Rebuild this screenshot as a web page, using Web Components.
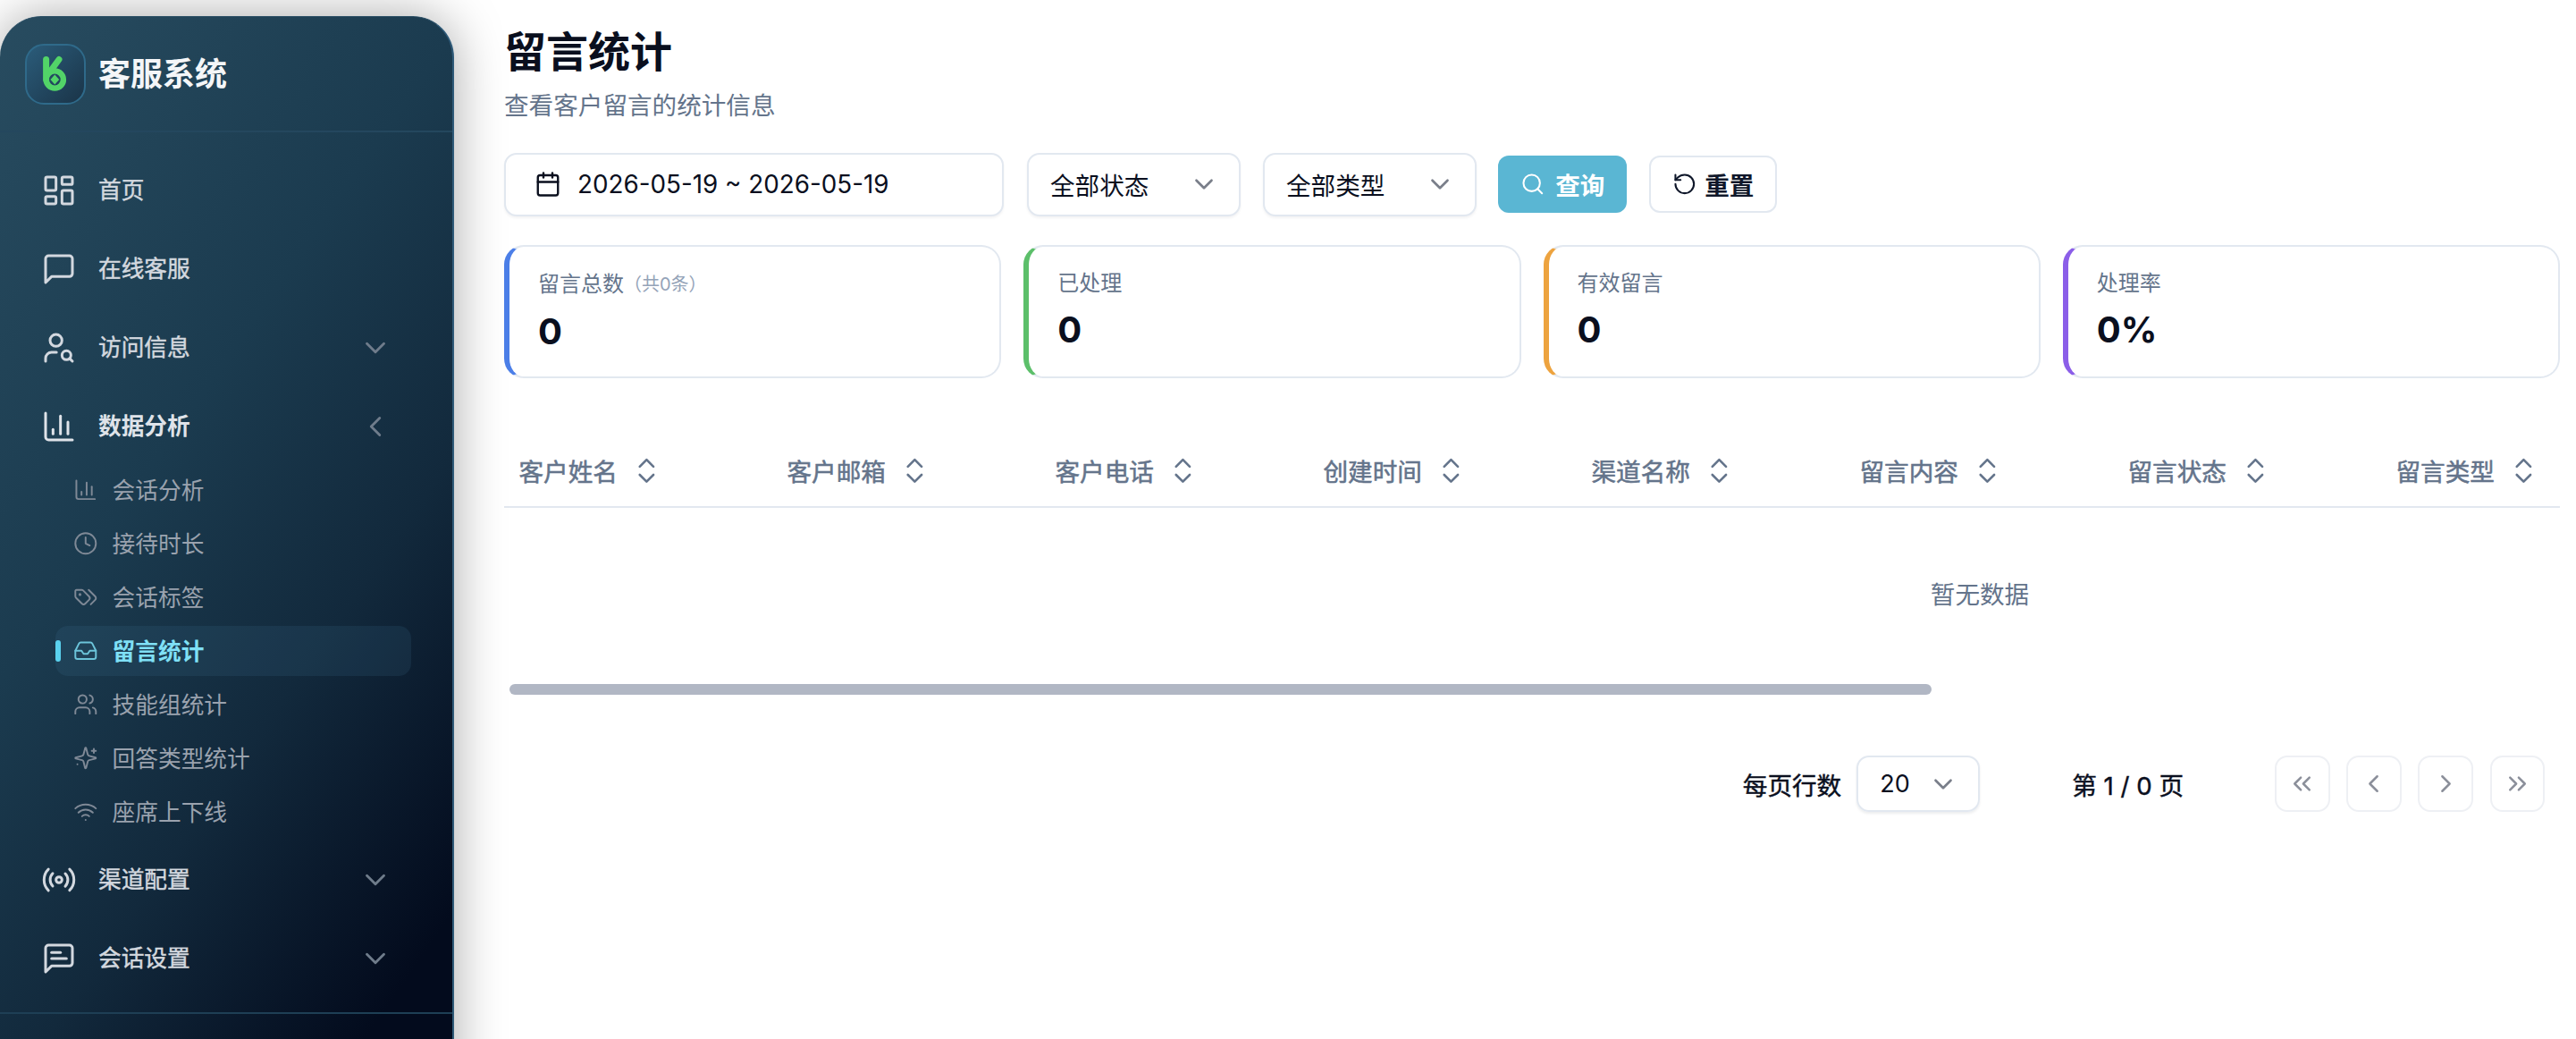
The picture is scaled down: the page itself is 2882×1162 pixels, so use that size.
<!DOCTYPE html>
<html lang="zh-CN">
<head>
<meta charset="utf-8">
<title>留言统计</title>
<style>
  html, body { margin: 0; padding: 0; height: 1162px; overflow: hidden; background: #fff; }
  body { font-family: Inter, "Noto Sans CJK SC", sans-serif; font-size: 25.7px; color: #0a0f1e; }
  app-shell { width: 2882px; height: 1162px; }
</style>
</head>
<body>
<app-shell>
  <app-sidebar slot="side">
    <brand-head>客服系统</brand-head>
    <nav-item icon="dashboard">首页</nav-item>
    <nav-item icon="message">在线客服</nav-item>
    <nav-item icon="usersearch" chevron="down">访问信息</nav-item>
    <nav-item icon="chart" chevron="left" open>数据分析</nav-item>
    <sub-menu>
      <sub-item icon="chart">会话分析</sub-item>
      <sub-item icon="clock">接待时长</sub-item>
      <sub-item icon="tags">会话标签</sub-item>
      <sub-item icon="inbox" active>留言统计</sub-item>
      <sub-item icon="users">技能组统计</sub-item>
      <sub-item icon="sparkles">回答类型统计</sub-item>
      <sub-item icon="wifi">座席上下线</sub-item>
    </sub-menu>
    <nav-item icon="radio" chevron="down">渠道配置</nav-item>
    <nav-item icon="messagetext" chevron="down">会话设置</nav-item>
  </app-sidebar>
  <page-main>
    <page-title sub="查看客户留言的统计信息">留言统计</page-title>
    <filter-bar>
      <date-field>2026-05-19 ~ 2026-05-19</date-field>
      <select-field w="239" gap="26">全部状态</select-field>
      <select-field w="239" gap="25">全部类型</select-field>
      <app-button icon="search" variant="primary" w="144" gap="24">查询</app-button>
      <app-button icon="reset" w="143" gap="25">重置</app-button>
    </filter-bar>
    <stat-grid>
      <stat-card color="#4c7fe8" value="0" note="（共0条）">留言总数</stat-card>
      <stat-card color="#5cbf6a" value="0">已处理</stat-card>
      <stat-card color="#eda33f" value="0">有效留言</stat-card>
      <stat-card color="#8b5ee8" value="0%">处理率</stat-card>
    </stat-grid>
    <data-table>
      <sort-head>客户姓名</sort-head>
      <sort-head>客户邮箱</sort-head>
      <sort-head>客户电话</sort-head>
      <sort-head>创建时间</sort-head>
      <sort-head>渠道名称</sort-head>
      <sort-head>留言内容</sort-head>
      <sort-head>留言状态</sort-head>
      <sort-head>留言类型</sort-head>
    </data-table>
    <page-bar></page-bar>
  </page-main>
</app-shell>

<script>
const ICONS = {
  dashboard: '<rect x="3" y="3" width="7" height="9" rx="1"/><rect x="14" y="3" width="7" height="5" rx="1"/><rect x="14" y="12" width="7" height="9" rx="1"/><rect x="3" y="16" width="7" height="5" rx="1"/>',
  message: '<path d="M21 15a2 2 0 0 1-2 2H7l-4 4V5a2 2 0 0 1 2-2h14a2 2 0 0 1 2 2z"/>',
  messagetext: '<path d="M21 15a2 2 0 0 1-2 2H7l-4 4V5a2 2 0 0 1 2-2h14a2 2 0 0 1 2 2z"/><path d="M13 8H7"/><path d="M17 12H7"/>',
  usersearch: '<circle cx="10" cy="7" r="4"/><path d="M10.3 15H7a4 4 0 0 0-4 4v2"/><circle cx="17" cy="17" r="3"/><path d="m21 21-1.9-1.9"/>',
  chart: '<path d="M3 3v16a2 2 0 0 0 2 2h16"/><path d="M18 17V9"/><path d="M13 17V5"/><path d="M8 17v-3"/>',
  clock: '<circle cx="12" cy="12" r="10"/><polyline points="12 6 12 12 16 14"/>',
  tags: '<path d="m15 5 6.3 6.3a2.4 2.4 0 0 1 0 3.4L17 19"/><path d="M9.586 5.586A2 2 0 0 0 8.172 5H3a1 1 0 0 0-1 1v5.172a2 2 0 0 0 .586 1.414L8.29 18.29a2.426 2.426 0 0 0 3.42 0l3.58-3.58a2.426 2.426 0 0 0 0-3.42z"/><circle cx="6.5" cy="9.5" r=".5" fill="currentColor"/>',
  inbox: '<polyline points="22 12 16 12 14 15 10 15 8 12 2 12"/><path d="M5.45 5.11 2 12v6a2 2 0 0 0 2 2h16a2 2 0 0 0 2-2v-6l-3.45-6.89A2 2 0 0 0 16.76 4H7.24a2 2 0 0 0-1.79 1.11z"/>',
  users: '<path d="M16 21v-2a4 4 0 0 0-4-4H6a4 4 0 0 0-4 4v2"/><circle cx="9" cy="7" r="4"/><path d="M22 21v-2a4 4 0 0 0-3-3.87"/><path d="M16 3.13a4 4 0 0 1 0 7.75"/>',
  sparkles: '<path d="M9.937 15.5A2 2 0 0 0 8.5 14.063l-6.135-1.582a.5.5 0 0 1 0-.962L8.5 9.936A2 2 0 0 0 9.937 8.5l1.582-6.135a.5.5 0 0 1 .963 0L14.063 8.5A2 2 0 0 0 15.5 9.937l6.135 1.581a.5.5 0 0 1 0 .964L15.5 14.063a2 2 0 0 0-1.437 1.437l-1.582 6.135a.5.5 0 0 1-.963 0z"/><path d="M20 3v4"/><path d="M22 5h-4"/><path d="M4 18h.01"/>',
  wifi: '<path d="M12 20h.01"/><path d="M2 8.82a15 15 0 0 1 20 0"/><path d="M5 12.859a10 10 0 0 1 14 0"/><path d="M8.5 16.429a5 5 0 0 1 7 0"/>',
  radio: '<path d="M4.9 19.1C1 15.2 1 8.8 4.9 4.9"/><path d="M7.8 16.2c-2.3-2.3-2.3-6.1 0-8.5"/><circle cx="12" cy="12" r="2"/><path d="M16.2 7.8c2.3 2.3 2.3 6.1 0 8.5"/><path d="M19.1 4.9C23 8.8 23 15.1 19.1 19"/>',
  calendar: '<path d="M8 2v4"/><path d="M16 2v4"/><rect x="3" y="4" width="18" height="18" rx="2"/><path d="M3 10h18"/>',
  search: '<circle cx="11" cy="11" r="8"/><path d="m21 21-4.3-4.3"/>',
  reset: '<path d="M3 12a9 9 0 1 0 9-9 9.75 9.75 0 0 0-6.74 2.74L3 8"/><path d="M3 3v5h5"/>',
  down: '<path d="m6 9 6 6 6-6"/>',
  left: '<path d="m15 18-6-6 6-6"/>',
  right: '<path d="m9 18 6-6-6-6"/>',
  dleft: '<path d="m11 17-5-5 5-5"/><path d="m18 17-5-5 5-5"/>',
  dright: '<path d="m6 17 5-5-5-5"/><path d="m13 17 5-5-5-5"/>',
  updown: '<path d="m7 15 5 5 5-5"/><path d="m7 9 5-5 5 5"/>'
};

function define(name, render) {
  customElements.define(name, class extends HTMLElement {
    connectedCallback() {
      if (this.shadowRoot) return;
      this.attachShadow({ mode: 'open' }).innerHTML = render(this);
    }
  });
}

define('ui-icon', el => {
  const s = el.getAttribute('size') || 24;
  const sw = el.getAttribute('sw') || 2;
  return `<style>:host{display:inline-flex;flex:none;width:${s}px;height:${s}px}svg{display:block;width:100%;height:100%}</style>
  <svg viewBox="0 0 24 24" fill="none" stroke="currentColor" stroke-width="${sw}" stroke-linecap="round" stroke-linejoin="round">${ICONS[el.getAttribute('name')] || ''}</svg>`;
});

define('app-shell', () => `<style>
  :host{display:flex;align-items:flex-start;overflow:hidden}
</style><slot name="side"></slot><slot></slot>`);

define('app-sidebar', () => `<style>
  :host{display:block;flex:none;box-sizing:border-box;width:508px;height:1240px;margin-top:18px;
    border-radius:46px 46px 0 0;border-right:2px solid #2f5a78;border-top:1px solid #294d63;
    background:linear-gradient(125deg,#284c60 0%,#1b3b4f 38%,#12293c 62%,#030b1d 88%);
    box-shadow:0 0 56px rgba(0,0,0,.34);position:relative;z-index:2;color:#d3d8df}
  .foot{margin-top:16px;border-top:2px solid #1e3f55}
</style><slot></slot><div class="foot"></div>`);

define('brand-head', () => `<style>
  :host{display:flex;align-items:center;gap:14px;box-sizing:border-box;height:129px;padding:0 0 0 28px;
    border-bottom:2px solid #24475e;margin-bottom:21px}
  .logo{box-sizing:border-box;width:68px;height:68px;border-radius:21px;border:2px solid #2f6a8a;
    background:linear-gradient(135deg,#2b5c7a,#1a3448);flex:none;overflow:hidden}
  svg{display:block;margin:-2px}
  .t{font-size:36px;font-weight:700;color:#f4f6f8;line-height:1}
</style>
<div class="logo"><svg width="68" height="68" viewBox="0 0 68 68" fill="none">
  <circle cx="33.3" cy="40" r="9.6" stroke="#52d468" stroke-width="6.4"/>
  <path d="M23.6 17.5V40" stroke="#52d468" stroke-width="7" stroke-linecap="round"/>
  <path d="M38 17.5 29.6 29" stroke="#52d468" stroke-width="7" stroke-linecap="round"/>
  <path d="M33.3 34.6 38.2 40 33.3 45.4 28.4 40Z" fill="#52d468"/>
</svg></div><div class="t"><slot></slot></div>`);

define('nav-item', el => {
  const c = el.getAttribute('chevron');
  const open = el.hasAttribute('open');
  return `<style>
    :host{display:flex;align-items:center;box-sizing:border-box;height:88px;padding:0 67px 0 46px;gap:24px;
      color:${open ? '#dfe3e9' : '#d3d8df'}}
    .t{flex:1;font-size:25.7px;line-height:1;${open ? 'font-weight:700' : 'font-weight:400;-webkit-text-stroke:.45px currentColor'}}
    .c{color:#6f7c8b;display:inline-flex}
  </style><ui-icon name="${el.getAttribute('icon')}" size="40" sw="1.8"></ui-icon>
  <span class="t"><slot></slot></span>
  ${c ? `<span class="c"><ui-icon name="${c}" size="38" sw="1.8"></ui-icon></span>` : ''}`;
});

define('sub-menu', () => `<style>
  :host{display:flex;flex-direction:column;margin:-3px 0 2px}
</style><slot></slot>`);

define('sub-item', el => {
  const a = el.hasAttribute('active');
  return `<style>
    :host{display:flex;align-items:center;box-sizing:border-box;height:56px;margin:2px 46px 2px 62px;
      padding-left:20px;gap:16px;border-radius:14px;position:relative;
      color:${a ? '#7fe0f6' : '#9aa2ae'};background:${a ? 'rgba(70,130,165,.14)' : 'transparent'}}
    .t{font-size:25.7px;line-height:1;font-weight:${a ? 600 : 400};padding-top:1px}
    ui-icon{color:${a ? '#6cc4da' : '#7f8996'}}
    ${a ? ':host::before{content:"";position:absolute;left:0;top:16px;width:6px;height:24px;border-radius:3px;background:#5ad1ee}' : ''}
  </style><ui-icon name="${el.getAttribute('icon')}" size="27.6" sw="1.7"></ui-icon><span class="t"><slot></slot></span>`;
});

define('page-main', () => `<style>
  :host{display:block;flex:1;min-width:0;box-sizing:border-box;padding:26px 18px 0 56px}
</style><slot></slot>`);

define('page-title', el => `<style>
  :host{display:block}
  h1{margin:0;font-size:47px;line-height:64px;font-weight:700;color:#0a0f1e}
  p{margin:8px 0 0;font-size:27.6px;line-height:40px;color:#64748b}
</style><h1><slot></slot></h1><p>${el.getAttribute('sub')}</p>`);

define('filter-bar', () => `<style>
  :host{display:flex;align-items:center;height:72px;margin-top:32px}
</style><slot></slot>`);

define('date-field', () => `<style>
  :host{display:flex;align-items:center;box-sizing:border-box;width:559px;height:71px;padding-left:32px;gap:18px;
    border:2px solid #e2e8f0;border-radius:14px;background:#fff;box-shadow:0 2px 3px rgba(15,23,42,.05);
    font-size:27.8px;color:#0a0f1e}
</style><ui-icon name="calendar" size="30" sw="1.9"></ui-icon><span><slot></slot></span>`);

define('select-field', el => `<style>
  :host{display:flex;align-items:center;box-sizing:border-box;width:${el.getAttribute('w')}px;height:71px;
    margin-left:${el.getAttribute('gap')}px;padding:0 22px 0 24px;justify-content:space-between;
    border:2px solid #e2e8f0;border-radius:14px;background:#fff;box-shadow:0 2px 3px rgba(15,23,42,.05);
    font-size:27.6px;color:#0a0f1e}
  ui-icon{color:#7a7f8a}
</style><span><slot></slot></span><ui-icon name="down" size="34" sw="1.9"></ui-icon>`);

define('app-button', el => {
  const p = el.getAttribute('variant') === 'primary';
  return `<style>
    :host{display:flex;align-items:center;justify-content:center;box-sizing:border-box;width:${el.getAttribute('w')}px;height:64px;
      margin-left:${el.getAttribute('gap')}px;gap:${p ? 12 : 9}px;border-radius:12px;
      background:${p ? '#5ab6d3' : '#fff'};border:${p ? '0' : '2px solid #e2e8f0'};
      color:${p ? '#fff' : '#0f172a'};font-size:27.6px;font-weight:600}
  </style><ui-icon name="${el.getAttribute('icon')}" size="27.6" sw="1.8"></ui-icon><span><slot></slot></span>`;
});

define('stat-grid', () => `<style>
  :host{display:grid;grid-template-columns:repeat(4,1fr);gap:25px;margin-top:32px}
</style><slot></slot>`);

define('stat-card', el => {
  const note = el.getAttribute('note');
  return `<style>
    :host{display:block;box-sizing:border-box;height:149px;padding:23px 24px 0 32px;background:#fff;
      border:2px solid #e2e8f0;border-left:6px solid ${el.getAttribute('color')};border-radius:22px}
    .l{font-size:24px;line-height:36px;color:#64748b;${note ? 'height:38px' : ''};display:flex;align-items:center}
    .n{font-size:20px;color:#94a3b8}
    .v{font-size:40px;line-height:48px;font-weight:700;color:#0a0f1e;margin-top:10px}
  </style><div class="l"><span><slot></slot></span>${note ? `<span class="n">${note}</span>` : ''}</div>
  <div class="v">${el.getAttribute('value')}</div>`;
});

define('sort-head', () => `<style>
  :host{display:flex;align-items:center;box-sizing:border-box;width:300px;flex:none;padding-left:16.5px;gap:14px;
    font-size:27.6px;font-weight:400;-webkit-text-stroke:.55px currentColor;color:#64748b}
  ui-icon{-webkit-text-stroke:0}
</style><span><slot></slot></span><ui-icon name="updown" size="36.8" sw="1.7"></ui-icon>`);

define('data-table', () => `<style>
  :host{display:block;margin-top:63px}
  .scroll{overflow:hidden}
  .inner{width:3302px}
  .head{display:flex;height:80px;border-bottom:2px solid #e2e8f0}
  .empty{display:flex;align-items:center;justify-content:center;height:190px;font-size:27.6px;color:#64748b}
  .thumb{width:1591px;height:12px;margin:7px 0 0 6px;border-radius:6px;background:#b1b7c4}
</style><div class="scroll"><div class="inner">
  <div class="head"><slot></slot></div>
  <div class="empty">暂无数据</div>
</div></div><div class="thumb"></div>`);

define('page-bar', () => `<style>
  :host{display:flex;align-items:center;justify-content:flex-end;height:63px;margin-top:68px;padding-right:17px;
    font-size:27.6px;color:#0a0f1e}
  .m{-webkit-text-stroke:.45px currentColor}
  .sel{display:flex;align-items:center;justify-content:space-between;box-sizing:border-box;width:138px;height:63px;margin-left:17px;
    padding:0 22px 0 24px;border:2px solid #e2e8f0;border-radius:14px;box-shadow:0 2px 3px rgba(15,23,42,.08);
    font-size:27px}
  .sel ui-icon{color:#7a7f8a}
  .info{margin:0 102px 0 103px;white-space:nowrap}
  .btn{display:flex;align-items:center;justify-content:center;box-sizing:border-box;width:61.5px;height:63px;margin-left:18.67px;
    border:2px solid #eef0f4;border-radius:14px;color:#8b8f9a}
  .btn.first{margin-left:0}
</style>
<span class="m">每页行数</span>
<div class="sel"><span>20</span><ui-icon name="down" size="34" sw="1.9"></ui-icon></div>
<span class="info m">第 1 / 0 页</span>
<div class="btn first"><ui-icon name="dleft" size="33" sw="1.8"></ui-icon></div>
<div class="btn"><ui-icon name="left" size="33" sw="1.8"></ui-icon></div>
<div class="btn"><ui-icon name="right" size="33" sw="1.8"></ui-icon></div>
<div class="btn"><ui-icon name="dright" size="33" sw="1.8"></ui-icon></div>`);
</script>
</body>
</html>
